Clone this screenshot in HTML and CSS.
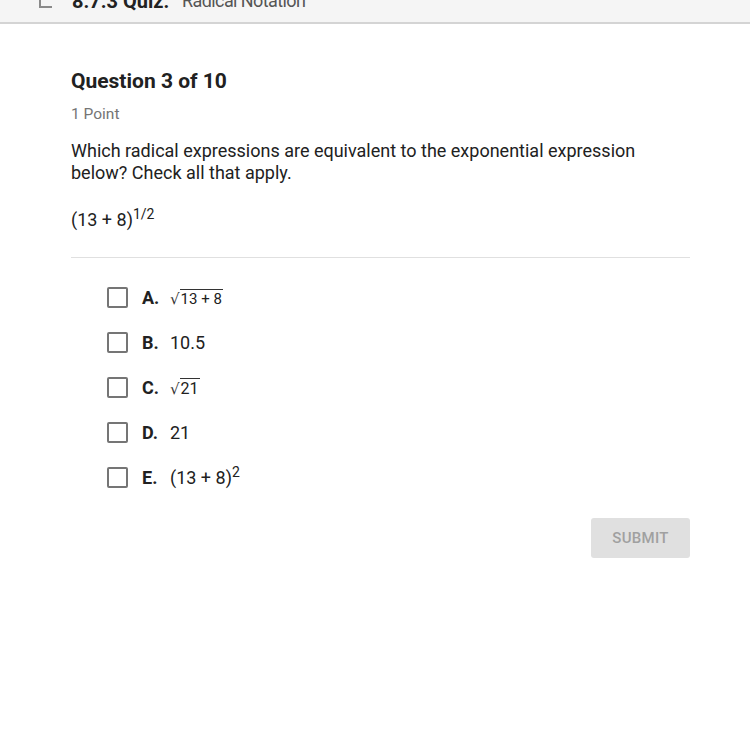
FILE: index.html
```html
<!DOCTYPE html>
<html lang="en">
<head>
    <meta charset="UTF-8">
    <meta name="viewport" content="width=device-width, initial-scale=1.0">
    <title>8.7.3 Quiz: Radical Notation</title>
    <link rel="stylesheet" href="styles.css">
</head>
<body>
    <div class="topbar">
        <svg class="topbar-icon" width="14" height="22" viewBox="0 0 14 22">
            <path d="M1 0 V14 H13" fill="none" stroke="#8a8a8a" stroke-width="2"/>
        </svg>
        <span class="quiz-num">8.7.3 Quiz:</span>
        <span class="quiz-name">Radical Notation</span>
    </div>

    <div class="main">
        <h2 class="q-title">Question 3 of 10</h2>
        <div class="q-points">1 Point</div>
        <p class="q-text">Which radical expressions are equivalent to the exponential expression below? Check all that apply.</p>
        <p class="q-expr">(13 + 8)<sup>1/2</sup></p>

        <div class="divider"></div>

        <div class="options">
            <label class="option">
                <span class="box"></span>
                <span class="letter">A.</span>
                <span class="answer"><span class="root">√</span><span class="radicand small">13 + 8</span></span>
            </label>
            <label class="option">
                <span class="box"></span>
                <span class="letter">B.</span>
                <span class="answer">10.5</span>
            </label>
            <label class="option">
                <span class="box"></span>
                <span class="letter">C.</span>
                <span class="answer"><span class="root">√</span><span class="radicand">21</span></span>
            </label>
            <label class="option">
                <span class="box"></span>
                <span class="letter">D.</span>
                <span class="answer">21</span>
            </label>
            <label class="option">
                <span class="box"></span>
                <span class="letter">E.</span>
                <span class="answer">(13 + 8)<sup>2</sup></span>
            </label>
        </div>

        <div class="actions">
            <button class="submit" disabled>SUBMIT</button>
        </div>
    </div>
</body>
</html>
```

FILE: styles.css
```css
body {
    margin: 0;
    font-family: Roboto, "Noto Sans", sans-serif;
    background-color: #fff;
    color: #212121;
}

.topbar {
    height: 22px;
    overflow: hidden;
    background-color: #f5f5f5;
    border-bottom: 2px solid #d4d4d4;
    display: flex;
    align-items: flex-end;
    padding-left: 39px;
}

.topbar-icon {
    align-self: flex-start;
    margin-top: -7px;
    margin-right: 19px;
}

.quiz-num,
.quiz-name {
    line-height: 20px;
    margin-bottom: 11px;
}

.quiz-num {
    font-size: 20px;
    font-weight: 700;
    color: #222;
    margin-right: 13px;
}

.quiz-name {
    font-size: 18px;
    letter-spacing: -0.6px;
    color: #555;
}

.main {
    padding: 0 60px 0 71px;
}

.q-title {
    margin: 44px 0 0;
    font-size: 21px;
    line-height: 26px;
    font-weight: 700;
    color: #212121;
}

.q-points {
    margin-top: 10px;
    font-size: 15.5px;
    line-height: 20px;
    color: #757575;
}

.q-text {
    margin: 16px 0 0;
    font-size: 18px;
    line-height: 22px;
    color: #212121;
}

.q-expr {
    margin: 25px 0 0;
    font-size: 18px;
    line-height: 22px;
}

sup {
    font-size: 14px;
    line-height: 0;
    vertical-align: 7px;
}

.divider {
    margin-top: 26px;
    height: 1px;
    background-color: #e0e0e0;
}

.options {
    margin-top: 17px;
    padding-left: 36px;
}

.option {
    display: flex;
    align-items: center;
    height: 45px;
}

.box {
    width: 17px;
    height: 17px;
    border: 2px solid #757575;
    border-radius: 2px;
    margin-right: 14px;
}

.letter {
    font-weight: 700;
    font-size: 18px;
    width: 28px;
}

.answer {
    font-size: 18px;
    color: #212121;
}

.root {
    font-size: 15px;
    font-family: "DejaVu Sans", sans-serif;
    color: #333;
}

.radicand {
    border-top: 1px solid #333;
    font-size: 16px;
    padding: 0 1px;
}

.radicand.small {
    font-size: 15px;
}

.actions {
    display: flex;
    justify-content: flex-end;
    margin-top: 18px;
}

.submit {
    width: 99px;
    height: 40px;
    background-color: #e0e0e0;
    color: #a0a0a0;
    border: none;
    border-radius: 3px;
    font-family: Roboto, sans-serif;
    font-size: 15px;
    font-weight: 500;
    letter-spacing: 0.3px;
}
```
